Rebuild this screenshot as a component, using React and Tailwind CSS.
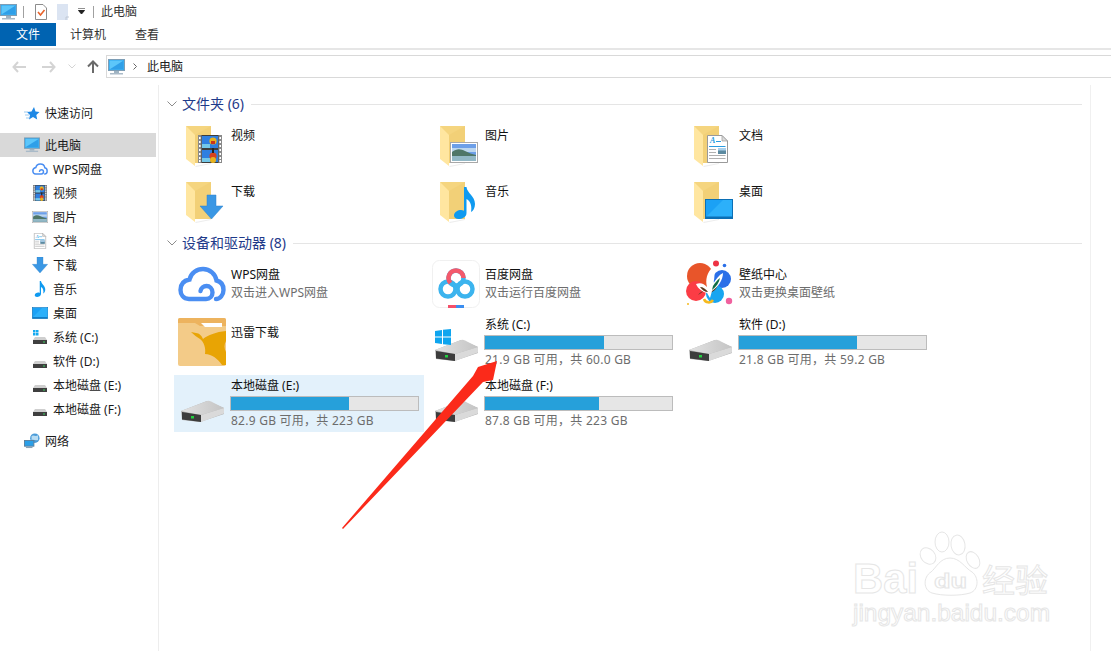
const Monitor = ({ className }) => (
    <svg viewBox="0 0 17 16" className={className}>
        <rect x="0.5" y="0.5" width="16" height="11" fill="#2aa5ee" stroke="#7d9db5" />
        <rect x="1.5" y="1.5" width="14" height="9" fill="#5cc6fa" />
        <path d="M1.5 10.5 L15.5 1.5 V10.5 Z" fill="#2f9fe8" />
        <rect x="6" y="12" width="5" height="2" fill="#9fb3c2" />
        <rect x="2" y="14" width="13" height="1.5" fill="#a9bac8" />
    </svg>
);

const Film = () => (
    <g>
        <rect width="24" height="28" fill="#3c3c3c" />
        <rect width="3.5" height="28" fill="#8a8a8a" />
        <rect x="20.5" width="3.5" height="28" fill="#8a8a8a" />
        {[2, 6, 10, 14, 18, 22, 25].map((y) => (
            <g key={y}>
                <rect x="1" y={y} width="1.6" height="2" fill="#fff" />
                <rect x="21.4" y={y} width="1.6" height="2" fill="#fff" />
            </g>
        ))}
        <rect x="4" y="1" width="16" height="12" fill="#2f7fe0" />
        <rect x="4" y="15" width="16" height="12" fill="#2f7fe0" />
        <rect x="4" y="9" width="8" height="4" fill="#73c7e8" />
        <rect x="4" y="23" width="8" height="4" fill="#73c7e8" />
        <circle cx="15" cy="6" r="3.6" fill="#e8b21e" />
        <path d="M13 6 h4 v3 h-4z" fill="#c8341e" />
        <circle cx="15" cy="21" r="3.6" fill="#d8421e" />
        <circle cx="15" cy="25" r="3" fill="#e8b21e" />
        <rect x="14" y="13" width="2" height="5" fill="#222" />
    </g>
);

const Picture = () => (
    <g>
        <rect x="0.5" y="0.5" width="27" height="20" fill="#fff" stroke="#a8a8a8" />
        <rect x="2" y="2" width="24" height="17" fill="#6d9fe8" />
        <rect x="2" y="6" width="24" height="4" fill="#bcd6ee" />
        <path d="M2 10 C7 6 11 7 15 9 C19 11 22 12 26 13 V19 H2 Z" fill="#4f7668" />
        <rect x="2" y="14" width="24" height="5" fill="#92b8c6" />
    </g>
);

const Doc = () => (
    <g>
        <path d="M0.5 0.5 H15 L20.5 6 V27.5 H0.5 Z" fill="#fff" stroke="#9a9a9a" />
        <path d="M15 0.5 V6 H20.5 Z" fill="#dcdcdc" stroke="#9a9a9a" strokeWidth="0.7" />
        <text x="3" y="8" fontSize="8" fontStyle="italic" fontWeight="700" fill="#2a9be0" fontFamily="Liberation Serif, serif">A</text>
        <path d="M9 6.5 H14 M2 11.5 H18.5" stroke="#2a9be0" />
        <path d="M2 14.5 H9 M2 17.5 H9 M2 20.5 H18.5 M2 23.5 H18.5" stroke="#b0b0b0" />
        <rect x="11" y="13" width="8" height="6" fill="#5c8aa0" />
        <rect x="11" y="13" width="8" height="2.5" fill="#a9d0ec" />
    </g>
);

const DownArrow = () => (
    <path d="M7 0 H16 V11 H23 L11.5 24 L0 11 H7 Z" fill="#3a97e4" stroke="#2d83cc" strokeWidth="0.5" />
);

const Note = () => (
    <path d="M10 0 H12.5 C13 6 21 9 21 17 C21 21 19 24 17 25 C18 20 17 14 12.5 12 V26 C12.5 30 8 32 4.5 32 C2 32 0 30.5 0 28.5 C0 25 4 23 7 23 C8 23 9 23.3 10 23.8 Z" fill="#0f9af0" />
);

const Desk = () => (
    <g>
        <rect x="0.5" y="0.5" width="27" height="19" fill="#1ba1f5" stroke="#0b6fb5" />
        <path d="M1 18 L18 1 H27 V18 Z" fill="#2cb0fa" />
        <rect x="1" y="17.5" width="26" height="2" fill="#0b6fb5" />
    </g>
);

const Folder = ({ children, x, y }) => (
    <svg viewBox="0 0 48 48" className="w-12 h-12">
        <path d="M0 0 H25 V37 H8 Z" fill="#f5d57f" />
        <path d="M9 9 L25 0 V37 H9 Z" fill="#f0cc70" opacity="0.5" />
        <path d="M0 0 L9 9 V40 L0 33 Z" fill="#ffe6a0" />
        <path d="M9 40 L25 37 V38 L10 41 Z" fill="#eeeeee" />
        <g transform={`translate(${x} ${y})`}>{children}</g>
    </svg>
);

const Drive = ({ windows }) => (
    <svg viewBox="0 0 44 34" className="w-11 h-[34px]">
        <defs>
            <linearGradient id="driveTop" x1="0" y1="0" x2="1" y2="0">
                <stop offset="0" stopColor="#e2e2e2" />
                <stop offset="1" stopColor="#c4c4c4" />
            </linearGradient>
        </defs>
        <path d="M0 21 L26 11 L43 18 V24 L19 32 L1 30 Z" fill="#b0b0b0" />
        <path d="M0 21 L26 11 Q28 10.5 30 11.5 L43 18 L20 25 Z" fill="url(#driveTop)" />
        <path d="M1 22 L20 25 V32 L1 29.5 Z" fill="#3c3c3c" />
        <path d="M20 25 L43 18 V23.5 L20 32 Z" fill="#dadada" />
        <rect x="10" y="26" width="3" height="2.5" fill="#22d040" />
        {windows && (
            <g fill="#0ea5ef">
                <path d="M0 2 L7 1 V7.5 H0 Z" />
                <path d="M8 0.8 L16 0 V7.5 H8 Z" />
                <path d="M0 8.5 H7 V15 L0 14 Z" />
                <path d="M8 8.5 H16 V16 L8 15.2 Z" />
            </g>
        )}
    </svg>
);

const SmallDrive = ({ windows }) => (
    <svg viewBox="0 0 16 16" className="w-4 h-4">
        <path d="M3 8 H13 L15 11 H1 Z" fill="#cfcfcf" />
        <rect x="1" y="11" width="14" height="4" fill="#3f3f3f" />
        <rect x="11" y="12.5" width="2" height="1" fill="#3ad060" />
        {windows && (
            <g fill="#14a9f0">
                <rect x="1" y="1" width="2.5" height="2.5" />
                <rect x="4" y="1" width="2.5" height="2.5" />
                <rect x="1" y="4" width="2.5" height="2.5" />
                <rect x="4" y="4" width="2.5" height="2.5" />
            </g>
        )}
    </svg>
);

const WpsCloud = ({ className }) => (
    <svg viewBox="0 0 48 48" className={className}>
        <path
            d="M20 39 H11 C5 39 2.5 34 2.5 30 C2.5 24 6 20.5 11.5 19.5 C13 13 19 9 25 9 C32 9 37.5 14 38.5 20.5 C43 21.5 45.5 25 45.5 30 C45.5 35 42 39 38 39 M20 39 H28 C32 39 34.5 36 34.5 32.5 C34.5 28.5 31.5 26 28.5 26 C25.5 26 23 28 22.5 31"
            fill="none"
            stroke="#4a8ef2"
            strokeWidth="4.4"
            strokeLinecap="round"
        />
    </svg>
);

const BaiduIcon = () => (
    <svg viewBox="0 0 48 48" className="w-12 h-12">
        <rect x="0.5" y="0.5" width="47" height="47" rx="7" fill="#fff" stroke="#f0f0f0" />
        <circle cx="16" cy="29" r="7.5" fill="none" stroke="#3cb4ee" strokeWidth="4.5" />
        <circle cx="33" cy="29" r="7.5" fill="none" stroke="#3cb4ee" strokeWidth="4.5" />
        <circle cx="24" cy="18" r="7.5" fill="none" stroke="#3cb4ee" strokeWidth="4.5" />
        <path d="M18.5 23 A7.5 7.5 0 0 1 24 10.5 A7.5 7.5 0 0 1 31.5 18" fill="none" stroke="#f4596b" strokeWidth="4.5" />
        <rect x="16" y="45" width="8" height="3" fill="#f4506a" />
        <rect x="24" y="45" width="8" height="3" fill="#3b8ef0" />
    </svg>
);

const WallpaperIcon = () => (
    <svg viewBox="0 0 48 48" className="w-12 h-12">
        <circle cx="14" cy="16" r="13" fill="#e8552a" />
        <circle cx="10" cy="31" r="10" fill="#fb3c45" />
        <circle cx="36" cy="19" r="9" fill="#2a6fe8" />
        <circle cx="29" cy="34" r="9" fill="#18a5f0" />
        <circle cx="43" cy="41" r="3.2" fill="#f0609e" />
        <path d="M18 39 A5 5 0 0 0 27 40" fill="none" stroke="#f5b91e" strokeWidth="2.5" />
        <circle cx="30" cy="3.5" r="3" fill="#ee3344" />
        <circle cx="38.5" cy="5.5" r="1.8" fill="#2a6fe8" />
        <circle cx="2" cy="44" r="1" fill="#f5b91e" />
        <path d="M12 35 C16 30 20 30 22 34 L26 32 C30 30 32 26 33 22 L24 27 Z" fill="#5a3a1e" />
        <path d="M10 24 C15 22 18 24 21 27 C19 20 21 12 27 7 C29 12 29 18 27 24 C30 19 33 15 37 13 C37 20 32 27 26 31 L24 38 L21 33 C17 32 12 29 10 24 Z" fill="#fff" />
        <path d="M27 26 C29 23 31 20 34 18 C33 23 30 27 26 30 Z" fill="#0f6b44" />
        <path d="M14 27 C17 27 20 29 22 32 C19 32 16 30 14 27 Z" fill="#5a3a1e" />
    </svg>
);

const XunleiIcon = () => (
    <svg viewBox="0 0 48 48" className="w-12 h-12">
        <rect width="48" height="48" rx="2" fill="#f3cb88" />
        <path d="M0 5 V2 A2 2 0 0 1 2 0 H46 A2 2 0 0 1 48 2 V8 H22 L17 5 Z" fill="#edb35e" />
        <path d="M23 5 H44 V9 H27 Z" fill="#fff" />
        <path d="M13 14 L18 15 C21 15 24 18 25 21 C30 17 38 14 48 13 V23 C46 27 46 30 48 34 V47 H44 C40 41 34 36 27 36 C28 30 26 24 22 21 C19 19 16 17 13 14 Z" fill="#e8a404" />
    </svg>
);

const Star = () => (
    <svg viewBox="0 0 16 16" className="w-4 h-4">
        <path d="M10 2 L11.5 6.5 L15.5 7 L12.3 10 L13.2 14.5 L9 12 L5 14.5 L6 10 L3 7 L7.5 6.5 Z" fill="#1e88e5" />
        <path d="M0 7 H4 M1 10 H5 M2 13 H5" stroke="#9cc9ef" />
    </svg>
);

const Network = () => (
    <svg viewBox="0 0 17 16" className="w-[17px] h-4">
        <circle cx="11.5" cy="5" r="5" fill="#4a9bd8" />
        <path d="M8 3 C10 1 12 4 15 2 L15 7 C12 8 10 6 8 7 Z" fill="#b8dcf2" />
        <rect x="0.5" y="7.5" width="10" height="6" fill="#2a9fe8" stroke="#5a7f9c" />
        <rect x="2" y="14" width="7" height="1.5" fill="#8aa2b5" />
    </svg>
);

const small = (viewBox, node) => (
    <svg viewBox={viewBox} className="w-4 h-4">
        {node}
    </svg>
);

const SideRow = ({ icon, label, top, active }) => (
    <div
        className={`flex items-center h-6 w-[156px] ${top ? "pl-[24px]" : "pl-[32px]"} ${active ? "bg-[#d9d9d9]" : ""}`}
    >
        <div className="flex items-center justify-center w-4 h-4 mr-[5px]">{icon}</div>
        <span className="pt-px text-[12px] leading-4 text-[#1a1a1a] whitespace-nowrap">{label}</span>
    </div>
);

const SectionHeader = ({ title }) => (
    <div className="flex items-center h-5 pl-[8px] pr-[8px]">
        <svg viewBox="0 0 10 6" className="w-[10px] h-[6px] mr-[5px]">
            <path d="M0.5 0.5 L5 5 L9.5 0.5" fill="none" stroke="#8c8c8c" />
        </svg>
        <span className="text-[14px] leading-5 text-[#1e3a8a] whitespace-nowrap">{title}</span>
        <div className="flex-1 h-px bg-[#e5e5e5] ml-[7px]" />
    </div>
);

const FolderTile = ({ label, children, x, y }) => (
    <div className="flex w-[250px] h-14">
        <div className="w-[57px] pl-[12px] pt-[7px]">
            <Folder x={x} y={y}>
                {children}
            </Folder>
        </div>
        <div className="pt-[9px] text-[12px] leading-4 text-[#111]">{label}</div>
    </div>
);

const AppTile = ({ icon, label, sub, top }) => (
    <div className="flex w-[250px]">
        <div className="w-[57px] pl-[4px] pt-[2px]">{icon}</div>
        <div className={`${top ? "pt-[9px]" : "pt-[11px]"} text-[12px] leading-4`}>
            <div className="text-[#111]">{label}</div>
            {sub && <div className="mt-[2px] text-[#6d6d6d]">{sub}</div>}
        </div>
    </div>
);

const DriveTile = ({ label, used, sub, windows, selected }) => (
    <div className={`flex w-[250px] h-[57px] ${selected ? "bg-[#e3f1fb]" : ""}`}>
        <div className="w-[57px] pl-[7px] pt-[15px]">
            <Drive windows={windows} />
        </div>
        <div className="pt-[3px] text-[12px] leading-4">
            <div className="text-[#111] whitespace-nowrap">{label}</div>
            <div className="mt-[2px] -ml-px w-[189px] h-[15px] border border-[#bcbcbc] bg-[#e6e6e6]">
                <div className="h-full bg-[#26a0da]" style={{ width: used }} />
            </div>
            <div className="mt-[2px] text-[#6d6d6d] whitespace-nowrap tracking-[0.25px]">{sub}</div>
        </div>
    </div>
);

const sideItems = [
    { label: "WPS网盘", icon: <WpsCloud className="w-4 h-4" /> },
    { label: "视频", icon: small("0 0 24 28", <Film />) },
    { label: "图片", icon: small("0 0 28 21", <Picture />) },
    { label: "文档", icon: small("0 0 21 28", <Doc />) },
    { label: "下载", icon: small("0 0 23 24", <DownArrow />) },
    { label: "音乐", icon: small("0 0 21 32", <Note />) },
    { label: "桌面", icon: small("0 0 28 20", <Desk />) },
    { label: "系统 (C:)", icon: <SmallDrive windows /> },
    { label: "软件 (D:)", icon: <SmallDrive /> },
    { label: "本地磁盘 (E:)", icon: <SmallDrive /> },
    { label: "本地磁盘 (F:)", icon: <SmallDrive /> },
];

const Arrow = ({ d, stroke }) => (
    <svg viewBox="0 0 14 12" className="w-[14px] h-3">
        <path d={d} fill="none" stroke={stroke} strokeWidth="2" />
    </svg>
);

export default function App() {
    return (
        <div className="relative w-[1111px] h-[651px] overflow-hidden bg-white flex flex-col font-['Noto_Sans','Noto_Sans_CJK_SC',sans-serif]">
            {/* title bar */}
            <div className="flex items-center h-[23px] shrink-0">
                <Monitor className="w-[17px] h-4" />
                <div className="w-px h-3 bg-[#a0a0a0] ml-[6px]" />
                <svg viewBox="0 0 12 16" className="w-3 h-4 ml-[11px]">
                    <path d="M0.5 0.5 H8 L11.5 4 V15.5 H0.5 Z" fill="#fff" stroke="#8c8c8c" />
                    <path d="M3 8 L5.5 11 L9.5 6" fill="none" stroke="#e8622a" strokeWidth="1.6" />
                </svg>
                <svg viewBox="0 0 12 16" className="w-3 h-4 ml-[10px]">
                    <path d="M0 0 H11 V16 H0 Z" fill="#dbe4f2" />
                    <path d="M9 16 V13 H12" fill="none" stroke="#c0c8d4" />
                </svg>
                <svg viewBox="0 0 7 7" className="w-[7px] h-[7px] ml-[9px]">
                    <path d="M0 0 H7 M0.5 2.5 H6.5 L3.5 6 Z" stroke="#222" fill="#222" />
                </svg>
                <div className="w-px h-3 bg-[#a0a0a0] ml-[8px]" />
                <span className="ml-[7px] pt-px text-[12px] leading-4 text-[#333]">此电脑</span>
            </div>

            {/* ribbon tabs */}
            <div className="flex items-center h-[23px] shrink-0 text-[12px]">
                <div className="flex items-center justify-center w-14 h-full bg-[#0063b1] text-white">文件</div>
                <span className="ml-[14px] text-[#333]">计算机</span>
                <span className="ml-[29px] text-[#333]">查看</span>
            </div>
            <div className="h-[4px] shrink-0 border-b-2 border-[#e6e6e6] mb-[5px]" />

            {/* address bar */}
            <div className="flex items-center h-[23px] shrink-0">
                <div className="ml-[12px] flex">
                    <Arrow d="M6 1 L1.5 6 L6 11 M2 6 H14" stroke="#d4d4d4" />
                </div>
                <div className="ml-[16px] flex">
                    <Arrow d="M8 1 L12.5 6 L8 11 M0 6 H12" stroke="#d4d4d4" />
                </div>
                <svg viewBox="0 0 8 5" className="w-2 h-[5px] ml-[12px]">
                    <path d="M0.5 0.5 L4 4 L7.5 0.5" fill="none" stroke="#d4d4d4" />
                </svg>
                <svg viewBox="0 0 12 13" className="w-3 h-[13px] ml-[11px]">
                    <path d="M1 6.5 L6 1.5 L11 6.5 M6 2 V13" fill="none" stroke="#6a6a6a" strokeWidth="2" />
                </svg>
                <div className="flex items-center flex-1 h-full ml-[7px] border-y border-l border-[#d9d9d9] pl-px">
                    <Monitor className="w-[17px] h-4" />
                    <svg viewBox="0 0 4 7" className="w-1 h-[7px] ml-[8px]">
                        <path d="M0.5 0.5 L3.5 3.5 L0.5 6.5" fill="none" stroke="#666" />
                    </svg>
                    <span className="ml-[10px] text-[12px] leading-4 text-[#222]">此电脑</span>
                </div>
            </div>

            {/* body */}
            <div className="flex flex-1 mt-[7px]">
                <div className="w-[159px] shrink-0 border-r border-[#ededed] pt-[16px]">
                    <SideRow top icon={<Star />} label="快速访问" />
                    <div className="mt-[8px]">
                        <SideRow top active icon={<Monitor className="w-[17px] h-4" />} label="此电脑" />
                        {sideItems.map((item) => (
                            <SideRow key={item.label} icon={item.icon} label={item.label} />
                        ))}
                    </div>
                    <div className="mt-[8px]">
                        <SideRow top icon={<Network />} label="网络" />
                    </div>
                </div>

                <div className="w-[932px] border-r border-[#f0f0f0] pt-[9px]">
                    <SectionHeader title="文件夹 (6)" />
                    <div className="grid grid-cols-[254px_254px_254px] pl-[15px] mt-[5px]">
                        <FolderTile label="视频" x={12} y={9}><Film /></FolderTile>
                        <FolderTile label="图片" x={10} y={16}><Picture /></FolderTile>
                        <FolderTile label="文档" x={13} y={9}><Doc /></FolderTile>
                        <FolderTile label="下载" x={14} y={13}><DownArrow /></FolderTile>
                        <FolderTile label="音乐" x={14} y={5}><Note /></FolderTile>
                        <FolderTile label="桌面" x={11} y={17}><Desk /></FolderTile>
                    </div>
                    <div className="mt-[2px]">
                        <SectionHeader title="设备和驱动器 (8)" />
                    </div>
                    <div className="grid grid-cols-[254px_254px_254px] grid-rows-[56px_61px_57px] pl-[15px] mt-[5px]">
                        <AppTile top icon={<WpsCloud className="w-12 h-12" />} label="WPS网盘" sub="双击进入WPS网盘" />
                        <AppTile top icon={<BaiduIcon />} label="百度网盘" sub="双击运行百度网盘" />
                        <AppTile top icon={<WallpaperIcon />} label="壁纸中心" sub="双击更换桌面壁纸" />
                        <AppTile icon={<div className="pt-[2px]"><XunleiIcon /></div>} label="迅雷下载" />
                        <DriveTile windows label="系统 (C:)" used={119} sub="21.9 GB 可用，共 60.0 GB" />
                        <DriveTile label="软件 (D:)" used={118} sub="21.8 GB 可用，共 59.2 GB" />
                        <DriveTile selected label="本地磁盘 (E:)" used={118} sub="82.9 GB 可用，共 223 GB" />
                        <DriveTile label="本地磁盘 (F:)" used={114} sub="87.8 GB 可用，共 223 GB" />
                    </div>
                </div>
            </div>

            {/* red annotation arrow */}
            <svg viewBox="0 0 1111 651" className="absolute inset-0 w-[1111px] h-[651px] pointer-events-none">
                <path d="M342 528 L473 376 L478 367 L497 361 L493 380 L483 382 L343 529 Z" fill="#fb2a1a" />
            </svg>

            {/* baidu watermark */}
            <svg viewBox="0 0 281 131" className="absolute left-[830px] top-[520px] w-[281px] h-[131px] pointer-events-none">
                <g fill="#fff" stroke="#e6e6e6" strokeWidth="1">
                    <ellipse cx="98" cy="36" rx="7" ry="9" transform="rotate(-40 98 36)" />
                    <ellipse cx="112" cy="22" rx="7" ry="10" />
                    <ellipse cx="128" cy="25" rx="7" ry="10" transform="rotate(-10 128 25)" />
                    <ellipse cx="143" cy="40" rx="6" ry="9" transform="rotate(-30 143 40)" />
                    <path d="M120 38 C110 38 106 48 101 52 C93 57 93 70 102 73 C112 76 130 76 140 73 C149 70 149 57 142 52 C135 48 130 38 120 38 Z" />
                    <text x="104" y="68" fontSize="20" fontWeight="700" fontFamily="Liberation Sans, sans-serif" textLength="33" lengthAdjust="spacingAndGlyphs">du</text>
                    <text x="23" y="73" fontSize="42" fontWeight="700" fontFamily="Liberation Sans, sans-serif" textLength="65" lengthAdjust="spacingAndGlyphs">Bai</text>
                    <text x="152" y="72" fontSize="32" fontFamily="Noto Sans CJK SC, sans-serif" textLength="66" lengthAdjust="spacingAndGlyphs">经验</text>
                    <text x="23" y="101" fontSize="24" fontFamily="Liberation Sans, sans-serif" textLength="197" lengthAdjust="spacingAndGlyphs">jingyan.baidu.com</text>
                </g>
            </svg>
        </div>
    );
}
